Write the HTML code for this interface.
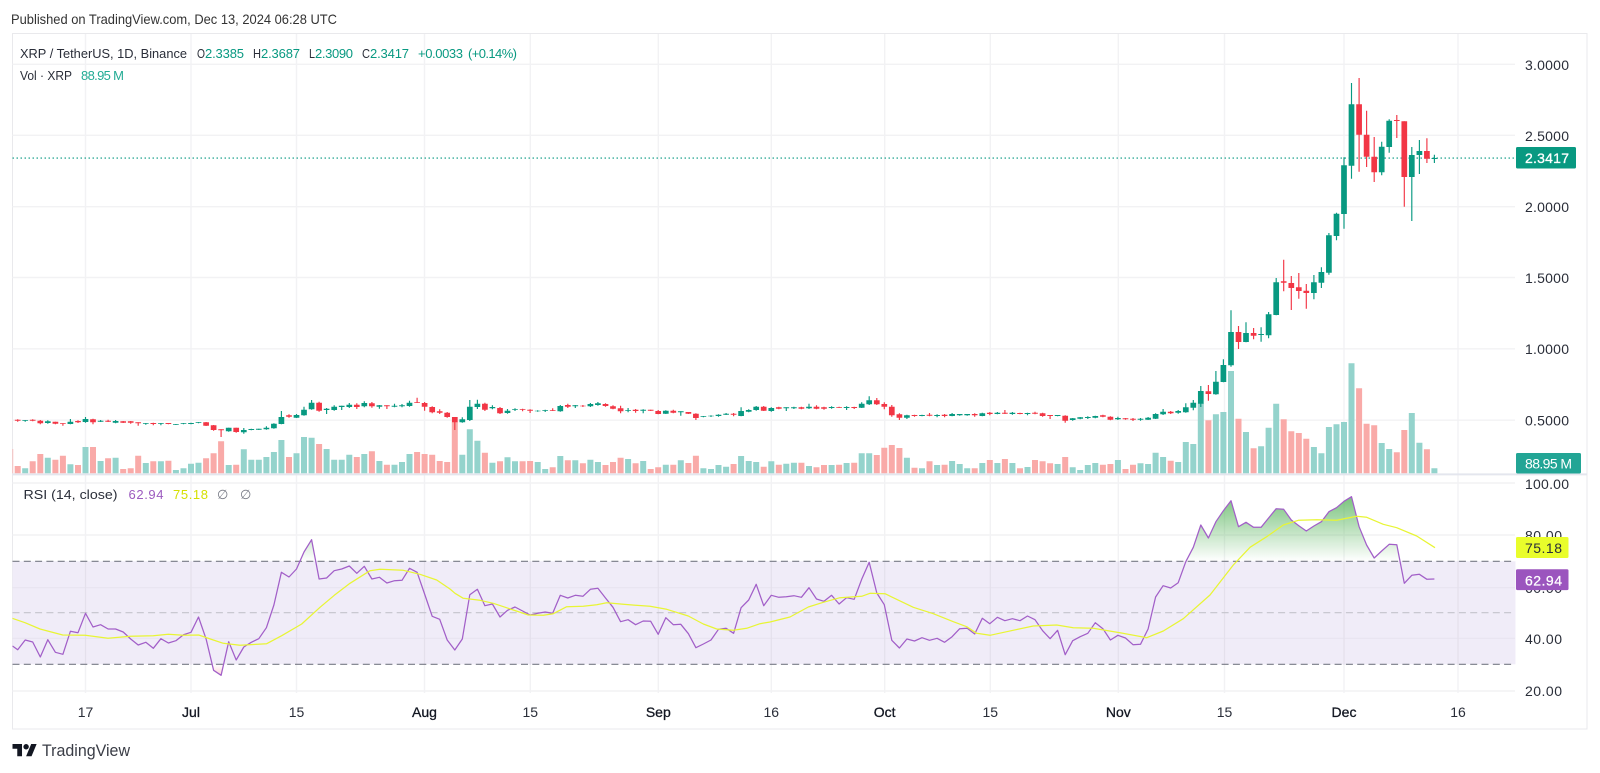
<!DOCTYPE html>
<html><head><meta charset="utf-8"><title>XRP / TetherUS</title>
<style>
html,body{margin:0;padding:0;background:#fff;width:1600px;height:773px;overflow:hidden}
svg{display:block;position:absolute;left:0;top:0;filter:blur(.3px)}
text{font-family:"Liberation Sans","DejaVu Sans",sans-serif;font-size:14px;fill:#2a2e39}
.l{font-size:13px}.g{fill:#089981}.t{fill:#22ab94}.c{text-anchor:middle}
.m{fill:#131722;stroke:#131722;stroke-width:.3}
</style></head><body>
<svg width="1600" height="773" viewBox="0 0 1600 773" xmlns="http://www.w3.org/2000/svg">
<defs>
<linearGradient id="gf" gradientUnits="userSpaceOnUse" x1="0" y1="483" x2="0" y2="561.3"><stop offset="0" stop-color="#4caf50" stop-opacity=".9"/><stop offset="1" stop-color="#4caf50" stop-opacity="0"/></linearGradient>
<linearGradient id="rf" gradientUnits="userSpaceOnUse" x1="0" y1="664.3" x2="0" y2="691"><stop offset="0" stop-color="#f23645" stop-opacity="0"/><stop offset="1" stop-color="#f23645" stop-opacity=".5"/></linearGradient>
<clipPath id="top"><rect x="12.5" y="476" width="1503" height="85.3"/></clipPath>
<clipPath id="bot"><rect x="12.5" y="664.3" width="1503" height="28"/></clipPath>
<clipPath id="plot"><rect x="12.5" y="34" width="1503" height="660"/></clipPath>
</defs>
<text x="11" y="24" textLength="326" lengthAdjust="spacingAndGlyphs" style="fill:#333;font-size:14px">Published on TradingView.com, Dec 13, 2024 06:28 UTC</text>
<rect x="12.5" y="33.5" width="1574.5" height="695.5" fill="none" stroke="#e9e9ec"/>
<g stroke="#f2f2f4" stroke-width="1.4" fill="none">
<path d="M12.5 64.3H1515M12.5 135.3H1515M12.5 206.7H1515M12.5 277.5H1515M12.5 348.8H1515M12.5 420.2H1515"/>
<path d="M85.5 34V693M191 34V693M296.5 34V693M424.5 34V693M530.3 34V693M658.3 34V693M771.3 34V693M884.7 34V693M990.3 34V693M1118.3 34V693M1224.5 34V693M1344 34V693M1458 34V693"/>
<path d="M12.5 483H1515M12.5 535H1515M12.5 691H1515"/>
</g>
<rect x="12.5" y="561.3" width="1503" height="103" fill="#f0ecf8"/>
<g stroke="#e8e4f0" stroke-width="1.2" fill="none"><path d="M12.5 587.7H1515M12.5 638.3H1515"/></g>
<g stroke="#e4e0ec" stroke-width="1.2" fill="none"><path d="M85.5 561V665M191 561V665M296.5 561V665M424.5 561V665M530.3 561V665M658.3 561V665M771.3 561V665M884.7 561V665M990.3 561V665M1118.3 561V665M1224.5 561V665M1344 561V665M1458 561V665"/></g>
<path d="M12.5 474.4H1587" stroke="#e4e6ee" stroke-width="2"/>
<g clip-path="url(#plot)">
<path id="vg" fill="none" stroke="#94d3cc" stroke-width="6"/>
<path id="vr" fill="none" stroke="#f9aaa8" stroke-width="6"/>
<path d="M12.5 158.1H1515" stroke="#089981" stroke-width="1.1" stroke-dasharray="1.5 2.5"/>
<path id="wg" fill="none" stroke="#089981" stroke-width="1.15"/>
<path id="wr" fill="none" stroke="#f23645" stroke-width="1.15"/>
<path id="bg" fill="none" stroke="#089981" stroke-width="5.7"/>
<path id="br" fill="none" stroke="#f23645" stroke-width="5.7"/>
<path id="fg" fill="url(#gf)" clip-path="url(#top)"/>
<path id="fr" fill="url(#rf)" clip-path="url(#bot)"/>
<path d="M12.5 561.3H1515M12.5 664.3H1515" stroke="#787b86" stroke-width="1.1" stroke-dasharray="7 4.3" fill="none"/>
<path d="M12.5 612.7H1515" stroke="#c3c3cb" stroke-width="1.1" stroke-dasharray="7 4.3" fill="none"/>
<path id="rsi" fill="none" stroke="#a25fc8" stroke-width="1.25" stroke-linejoin="round"/>
<path id="ma" fill="none" stroke="#e8f534" stroke-width="1.25" stroke-linejoin="round"/>
</g>
<text class="l" x="20" y="58" textLength="167" lengthAdjust="spacingAndGlyphs">XRP / TetherUS, 1D, Binance</text>
<text class="l" x="197" y="58" textLength="8" lengthAdjust="spacingAndGlyphs">O</text><text class="l g" x="205" y="58" textLength="39">2.3385</text>
<text class="l" x="253" y="58" textLength="8" lengthAdjust="spacingAndGlyphs">H</text><text class="l g" x="261" y="58" textLength="39">2.3687</text>
<text class="l" x="309" y="58" textLength="6" lengthAdjust="spacingAndGlyphs">L</text><text class="l g" x="315" y="58" textLength="38">2.3090</text>
<text class="l" x="362" y="58" textLength="8" lengthAdjust="spacingAndGlyphs">C</text><text class="l g" x="370" y="58" textLength="39">2.3417</text>
<text class="l g" x="418" y="58" textLength="45">+0.0033</text>
<text class="l g" x="468" y="58" textLength="49">(+0.14%)</text>
<text class="l" x="20" y="80" textLength="52" lengthAdjust="spacingAndGlyphs">Vol · XRP</text>
<text class="l t" x="81" y="80" textLength="43">88.95 M</text>
<text class="l" x="23.5" y="499" textLength="94" lengthAdjust="spacingAndGlyphs">RSI (14, close)</text>
<text class="l" x="128.5" y="499" textLength="35" style="fill:#9c5bbf">62.94</text>
<text class="l" x="173" y="499" textLength="35" style="fill:#d5e000">75.18</text>
<text class="l" x="217" y="499" style="fill:#787b86">∅</text>
<text class="l" x="240" y="499" style="fill:#787b86">∅</text>
<g>
<text x="1525" y="70" textLength="44">3.0000</text>
<text x="1525" y="141" textLength="44">2.5000</text>
<text x="1525" y="212" textLength="44">2.0000</text>
<text x="1525" y="283" textLength="44">1.5000</text>
<text x="1525" y="354" textLength="44">1.0000</text>
<text x="1525" y="425.5" textLength="44">0.5000</text>
<rect x="1516" y="147" width="60" height="21.5" rx="1.5" fill="#089981"/>
<text x="1525" y="163" textLength="44" style="fill:#fff;stroke:#fff;stroke-width:.3">2.3417</text>
<rect x="1516" y="453" width="65" height="20.5" rx="1.5" fill="#22a595"/>
<text x="1525" y="468.5" textLength="47" style="fill:#fff">88.95 M</text>
<text x="1525" y="489" textLength="44">100.00</text>
<text x="1525" y="540.5" textLength="37">80.00</text>
<text x="1525" y="593" textLength="37">60.00</text>
<text x="1525" y="644" textLength="37">40.00</text>
<text x="1525" y="696" textLength="37">20.00</text>
<rect x="1516" y="537" width="52.5" height="21" rx="1.5" fill="#e9fd2b"/>
<text x="1525" y="553" textLength="37">75.18</text>
<rect x="1516" y="569.3" width="52.5" height="20.8" rx="1.5" fill="#9b55be"/>
<text x="1525" y="585.5" textLength="37" style="fill:#fff;stroke:#fff;stroke-width:.25">62.94</text>
</g>
<g>
<text class="c" x="85.5" y="717">17</text><text class="c m" x="191" y="717">Jul</text>
<text class="c" x="296.5" y="717">15</text><text class="c m" x="424.5" y="717">Aug</text>
<text class="c" x="530.3" y="717">15</text><text class="c m" x="658.3" y="717">Sep</text>
<text class="c" x="771.3" y="717">16</text><text class="c m" x="884.7" y="717">Oct</text>
<text class="c" x="990.3" y="717">15</text><text class="c m" x="1118.3" y="717">Nov</text>
<text class="c" x="1224.5" y="717">15</text><text class="c m" x="1344" y="717">Dec</text>
<text class="c" x="1458" y="717">16</text>
</g>
<g transform="translate(12.5 741.3) scale(.68)" fill="#131722"><path d="M14 22H7V11H0V4h14v18zM28 22h-8l7.5-18h8L28 22z"/><circle cx="20" cy="8" r="4"/></g>
<text x="42" y="756" textLength="88" lengthAdjust="spacingAndGlyphs" style="font-size:16.5px;fill:#3a3d46">TradingView</text>
</svg>
<script>
(function(){
var VA=[-258,265,-244,-222,233,-239,-227,253,-255,201,-201,243,-235,233,-267,-265,-227,249,-244,244,-242,270,265,251,248,-235,-220,-184,255,-254,208,239,239,231,216,180,-231,220,
171,173,-192,207,239,239,224,-231,222,-214,243,-254,254,246,222,-216,-222,-224,-243,-246,-125,224,148,182,-218,248,-244,232,244,-244,-243,246,267,-262,228,-241,241,-250,239,246,
-255,-246,-233,237,-250,243,-267,-262,254,-254,241,-249,-227,265,267,255,260,-252,228,243,246,-260,244,-254,251,248,-248,258,-262,-255,255,-254,249,-248,220,220,-225,-203,-195,-204,
233,-263,265,-244,255,-254,243,252,265,-265,249,-240,249,-237,249,-265,261,-240,-244,-250,252,-231,262,270,255,249,-254,-252,240,-267,-254,250,252,218,231,-242,246,186,192];
var VB=[430,-481,463,456,333,-476,516,-565,559,503,431,-478,-514,-519,-536,561,580,501,493,486,310,-385,-491,-496,549,567,-577,-510,459,548,-568,625];
var CA=[119,122,118,125,120,122,120,125,119,122,118,124,122,130,120,133,124,129,121,131,125,131,125,133,130,132,130,137,125,132,117,133,123,127,121,129,117,126,111,128,118,127,116,133,122,125,120,126,122,125,119,126,123,128,120,130,124,128,123,129,124,128,123,131,127,130,127,137,130,132,129,134,129,132,128,136,130,132,129,136,129,132,129,133,132,134,132,135,130,132,129,133,129,132,128,133,127,129,126,130,127,137,126,138,136,150,135,152,148,151,148,171,143,154,143,155,143,156,143,158,150,157,144,161,147,150,146,151,146,149,146,150,143,148,139,149,131,145,130,146,111,132,93,133,106,110,103,113,105,113,102,114,
89,106,80,107,68,88,60,89,68,92,65,95,86,90,84,102,80,90,76,92,77,81,77,90,74,81,69,84,74,81,70,87,69,79,64,82,70,79,66,83,76,80,75,86,76,79,76,87,77,80,71,82,76,79,72,82,68,78,62,80,67,69,53,69,69,80,66,92,81,97,79,100,94,98,88,102,98,111,96,113,111,127,111,150,118,127,112,128,80,120,60,123,71,81,59,87,71,89,68,93,81,85,76,88,84,100,81,102,92,99,87,101,87,89,85,93,87,89,86,94,89,92,88,99,92,94,91,95,90,92,89,96,90,92,85,93,78,94,75,95,75,80,71,84,76,79,75,84,77,79,75,81,72,79,69,81,70,75,66,77,
72,78,70,80,79,86,76,88,85,94,77,100,90,92,84,97,89,93,87,98,89,92,88,100,89,92,89,93,93,102,90,103,92,101,91,102,92,98,89,100,94,97,94,107,96,101,96,102,101,114,100,120,108,110,108,112,107,109,106,111,104,108,103,110,101,104,99,105,101,104,99,109,93,108,82,109,90,95,88,97,80,90,78,92,80,92,78,93,84,93,82,95,82,86,80,88,82,85,82,93,82,85,80,87,82,86,80,88,80,85,71,87,80,86,76,88,82,86,80,89,81,84,79,86,81,83,80,84,81,84,79,90,81,84,80,87,71,83,67,84,61,73,49,75,61,73,54,75,72,80,67,88,80,106,75,110,103,113,100,120,
106,113,104,117,105,108,104,110,105,108,104,109,104,107,99,109,105,108,103,112,104,108,102,112,102,108,99,109,102,106,102,107,102,106,102,107,102,106,100,110,100,108,98,109,98,102,96,106,98,102,96,103,98,101,90,102,98,102,96,104,99,102,98,103,99,102,98,106,98,101,95,103,100,108,98,110,105,108,105,117,105,108,105,109,107,122,106,128,115,120,114,122,112,116,111,118,111,114,109,117,108,113,107,115,106,110,104,112,110,119,109,121,114,118,110,120,115,118,114,119,116,119,114,123,116,119,114,122,113,119,111,120,102,116,100,117,95,103,87,105,95,100,93,102,93,98,90,101,82,97,70,98,68,83,60,91];
var CB=[393,431,378,441,394,402,375,422,365,403,333,404,315,366,298,367,216,316,151,320,216,246,198,267,219,246,187,247,219,227,204,238,222,225,202,245,163,226,156,235,67,165,54,166,64,68,-1,94,69,84,48,150,82,93,39,116,92,99,72,146,67,99,45,118,36,68,22,84];
var CC=[496,608,489,614,431,498,428,511,286,432,262,476,103,287,39,326,103,194,24,305,194,260,122,291,260,307,201,336,230,307,215,316,152,231,148,248,150,153,135,204,154,321,154,410,255,321,231,453,243,255,210,312,243,266,205,279,264,267,254,279];
var RA=[389,360,366,411,359,397,403,334,338,280,321,314,327,327,336,357,375,367,385,356,369,362,344,337,291,357,451,466,365,420,381,367,356,323,255,157,171,147,96,59,177,174,152,147,138,160,139,177,172,189,182,181,145,157,222,289,298,360,
390,357,224,208,257,252,291,271,261,273,285,280,276,280,226,234,226,229,208,205,234,262,305,299,314,303,304,343,293,314,313,341,383,372,360,328,325,340,263,240,193,257,226,232,230,227,232,203,237,244,226,252,233,238,178,127,219,254,361,384,357,363,353,361,355,367,350,326,325,342,295,311,292,302,296,302,288,299,332,356,331,404,362,350,340,308,326,360,346,354,374,373,327];
var RB=[381,347,354,338,275,232,165,204,155,122,92,170,157,172,172,144,116,118,150,167,183,168,155,125,113,94,80,170,225,264,243,223,224,340,316,313,328,327];
var M=[[0,520,[37,295,75,308,120,327,188,345,256,346,324,355,391,349,460,347,505,343,550,346,596,345,640,360,670,370,720,376,800,371,845,347,905,312,960,262,1003,226,1050,190,1110,152,1140,148,1210,151,1260,163,1310,180,1350,207]],
[450,520,[15,220,40,235,90,241,130,250,190,270,235,285,280,286,310,281,350,260,400,259,440,254,470,248,520,253,600,259,650,268,715,288,760,312,800,327,850,331,890,325,930,311,960,306,1020,291,1075,261,1120,247,1170,233,1235,229,1260,220]],
[800,520,[255,221,340,262,400,281,460,305,500,320,530,340,570,346,620,335,700,318,770,315,820,323,880,325,960,338,1040,353,1090,333,1150,296,1230,225,1300,135]],
[1150,470,[300,232,350,200,400,165,445,151,500,149,560,151,620,139,650,142,700,163,740,173,800,198,855,233]]];
var X=function(d){return +(191+7.536*d).toFixed(1)};
var i,vg='',vr='',wg='',wr='',bg='',br='';
function put(d,v,base){var x=X(d),a=Math.abs(v),y=(base+a/3).toFixed(1),s='M'+x+' '+y+'V473.3';if(v<0)vr+=s;else vg+=s}
var n=VA.length;
for(i=0;i<n;i++)put(i-23,VA[i],380);
for(i=0;i<VB.length;i++)put(i+134,VB[i],260);
vr='M10.2 449V473.3'+vr;
function can(A,base,d0,sign){for(var j=0;j*4<A.length;j++){var d=d0+j,x=X(d),red=sign(d)<0,
t=(base+A[j*4]/3).toFixed(1),b=(base+A[j*4+1]/3).toFixed(1),h=(base+A[j*4+2]/3).toFixed(1),l=(base+A[j*4+3]/3).toFixed(1);
var w='M'+x+' '+h+'V'+l,bd='M'+x+' '+t+'V'+b;if(red){wr+=w;br+=bd}else{wg+=w;bg+=bd}}}
var sg=function(d){return d<134?VA[d+23]:VB[d-134]};
can(CA,380,-23,sg);can(CB,260,134,sg);can(CC,70,151,sg);
var pts=[[12.5,646]];
for(i=0;i<RA.length;i++)pts.push([X(i-23),520+RA[i]/3]);
for(i=0;i<RB.length;i++)pts.push([X(i+128),470+RB[i]/3]);
var rs='',k;for(k=0;k<pts.length;k++)rs+=(k?'L':'M')+pts[k][0]+' '+pts[k][1].toFixed(1);
var lastX=pts[pts.length-1][0];
var ma='';M.forEach(function(s){for(var j=0;j<s[2].length;j+=2){ma+=(ma?'L':'M')+(s[0]+s[2][j]/3).toFixed(1)+' '+(s[1]+s[2][j+1]/3).toFixed(1)}});
var set=function(id,d){document.getElementById(id).setAttribute('d',d)};
set('vg',vg);set('vr',vr);set('wg',wg);set('wr',wr);set('bg',bg);set('br',br);
set('rsi',rs);set('ma',ma);
set('fg','M12.5 561.3'+rs.replace(/^M/,'L')+'L'+lastX+' 561.3Z');
set('fr','M12.5 664.3'+rs.replace(/^M/,'L')+'L'+lastX+' 664.3Z');
})();
</script>
</body></html>
